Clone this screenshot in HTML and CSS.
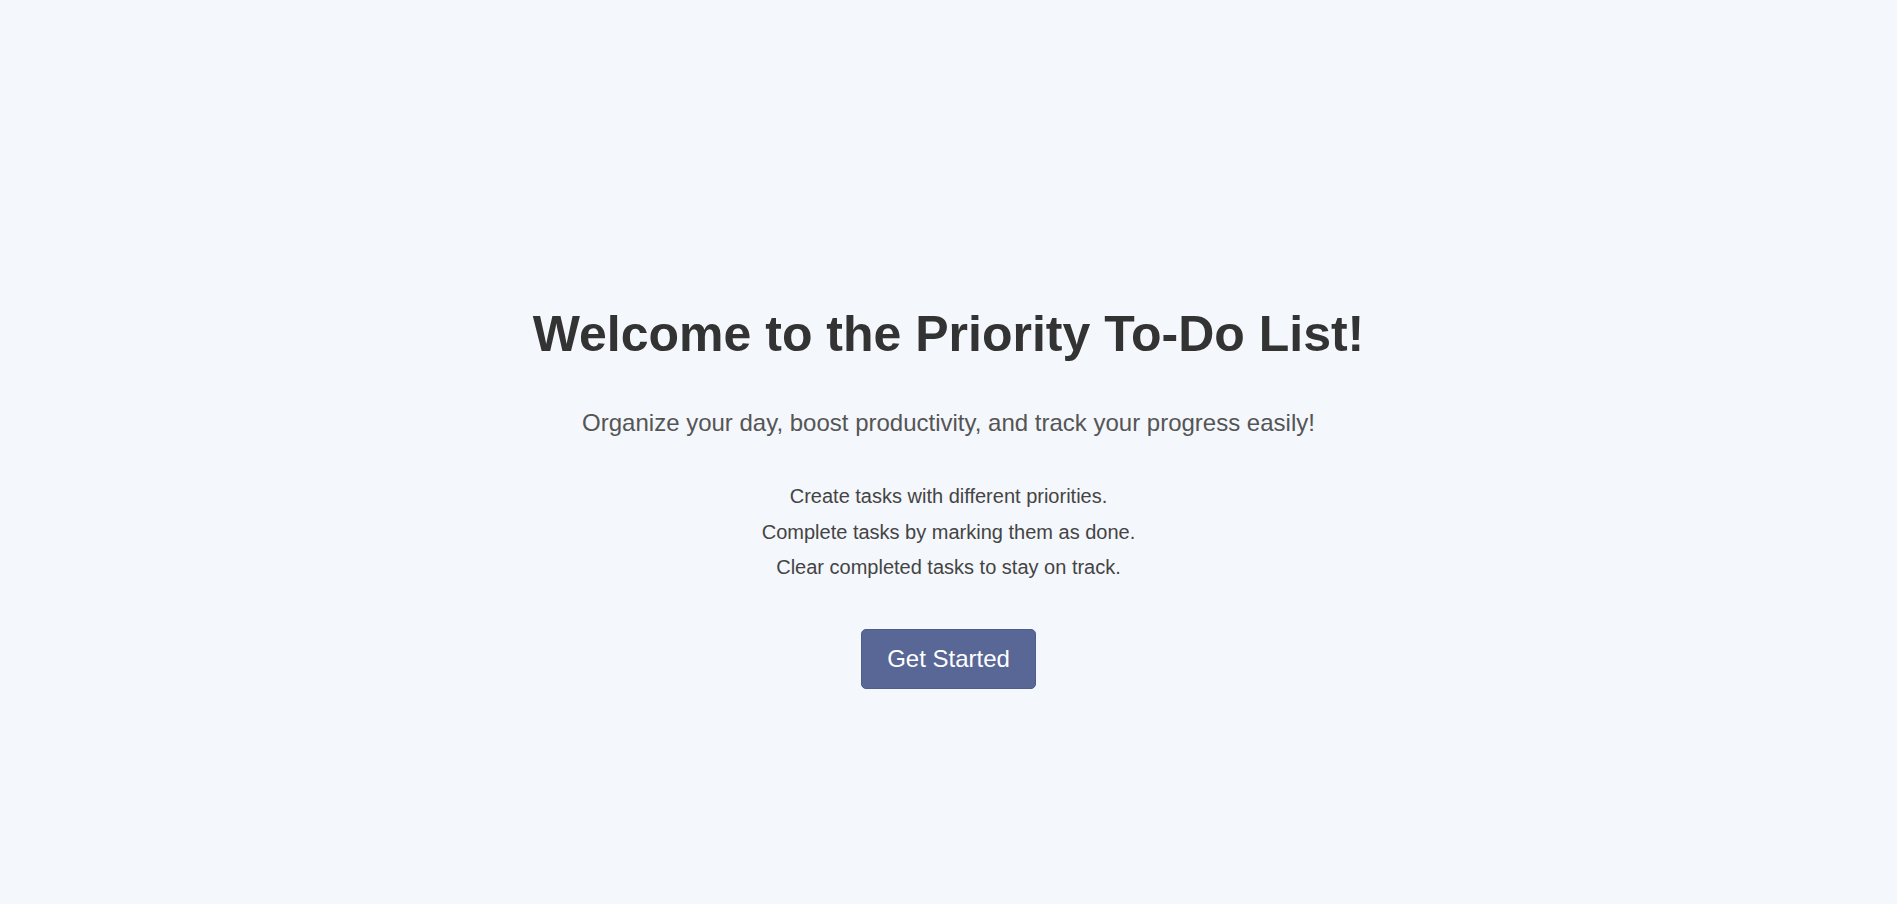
FILE: index.html
```html
<!DOCTYPE html>
<html lang="en">
<head>
<meta charset="utf-8">
<title>Priority To-Do List</title>
<link rel="stylesheet" href="styles.css">
</head>
<body>
<main class="welcome">
  <h1 class="welcome-title">Welcome to the Priority To-Do List!</h1>
  <p class="welcome-subtitle">Organize your day, boost productivity, and track your progress easily!</p>
  <ul class="feature-list">
    <li>Create tasks with different priorities.</li>
    <li>Complete tasks by marking them as done.</li>
    <li>Clear completed tasks to stay on track.</li>
  </ul>
  <button class="start-button" type="button">Get Started</button>
</main>
</body>
</html>
```

FILE: styles.css
```css
html, body {
  margin: 0;
  padding: 0;
}
body {
  background: #f4f7fc;
  font-family: "Liberation Sans", Arial, sans-serif;
  color: #333;
  min-height: 904px;
}
.welcome {
  display: flex;
  flex-direction: column;
  align-items: center;
  text-align: center;
  padding-top: 305px;
}
.welcome-title {
  margin: 0;
  font-size: 50px;
  font-weight: bold;
  color: #333;
}
.welcome-subtitle {
  margin: 46px 0 0;
  font-size: 24px;
  color: #555;
}
.feature-list {
  list-style: none;
  margin: 42px 0 0;
  padding: 0;
  font-size: 20px;
  line-height: 35.5px;
  color: #444;
}
.start-button {
  margin-top: 43px;
  padding: 15px 25px;
  font-family: "Liberation Sans", Arial, sans-serif;
  font-size: 24px;
  color: #fff;
  background: #586796;
  border: 1px solid #4f5d8a;
  border-radius: 5px;
  cursor: pointer;
}
```
